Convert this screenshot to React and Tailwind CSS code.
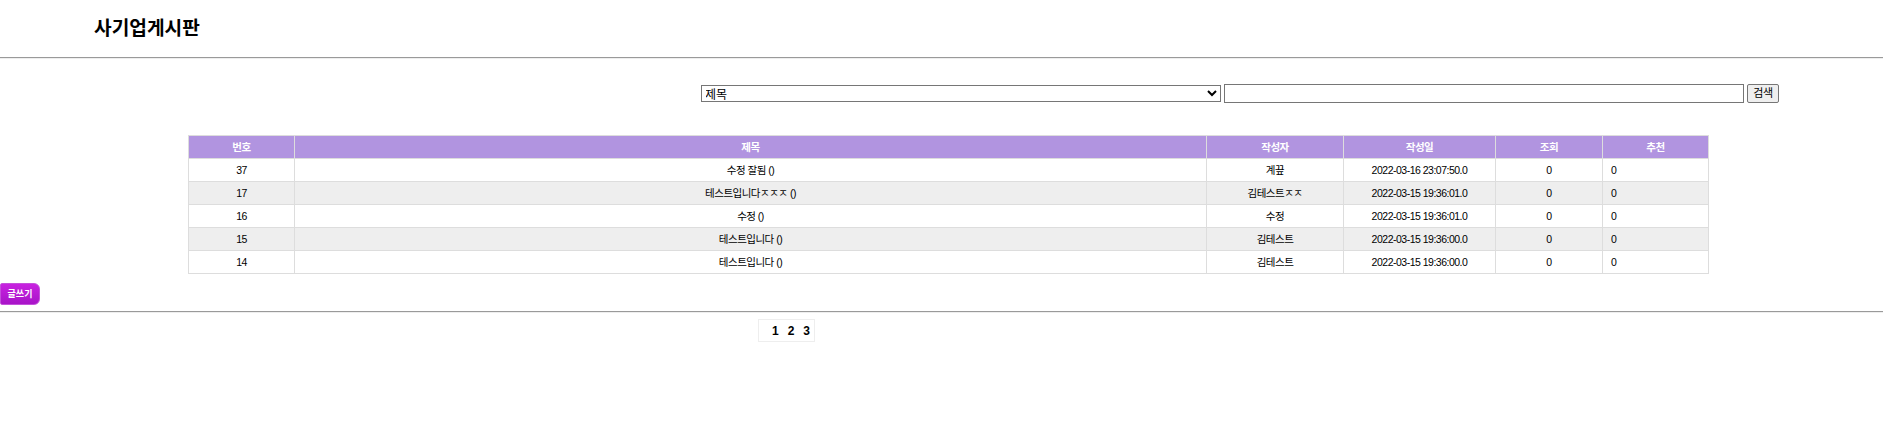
import React from "react";

const rows = [
  ["37", "수정 잘됨 ()", "계끞", "2022-03-16 23:07:50.0"],
  ["17", "테스트입니다ㅈㅈㅈ ()", "김테스트ㅈㅈ", "2022-03-15 19:36:01.0"],
  ["16", "수정 ()", "수정", "2022-03-15 19:36:01.0"],
  ["15", "테스트입니다 ()", "김테스트", "2022-03-15 19:36:00.0"],
  ["14", "테스트입니다 ()", "김테스트", "2022-03-15 19:36:00.0"],
];

const headers = ["번호", "제목", "작성자", "작성일", "조회", "추천"];

export default function App() {
  return (
    <div className="min-h-[426px] bg-white text-black font-['Liberation_Sans','Noto_Sans_CJK_KR',sans-serif]">
      <div className="h-[57px] pl-[94px] pt-[17px]">
        <h3 className="text-[19.2px] font-bold leading-[24px]">사기업게시판</h3>
      </div>
      <hr className="border-0 border-t border-b border-t-[#9a9a9a] border-b-[#eeeeee]" />

      <form className="flex items-center pl-[701px] mt-[25px] h-[19px] gap-[3px]">
        <select className="w-[520px] h-[17px] border border-[#767676] bg-white text-[12px] leading-none -indent-px pt-px">
          <option>제목</option>
        </select>
        <input className="w-[520px] h-[19px] border border-[#767676] bg-white" />
        <button type="button" className="w-[32px] h-[19px] border border-[#767676] bg-[#efefef] rounded-[2px] text-[11px] leading-none tracking-[-0.3px]">
          검색
        </button>
      </form>

      <div className="pl-[188px] mt-[32px]">
        <table className="w-[1520px] table-fixed text-[10.5px] tracking-[-0.5px] border-collapse">
          <colgroup>
            <col className="w-[106px]" />
            <col className="w-[912px]" />
            <col className="w-[137px]" />
            <col className="w-[152px]" />
            <col className="w-[107px]" />
            <col className="w-[106px]" />
          </colgroup>
          <thead>
            <tr className="h-[23px] bg-[#b194e0] text-white">
              {headers.map((h) => (
                <th key={h} className="border border-[#dddddd] font-bold p-0 pt-[2px]">
                  {h}
                </th>
              ))}
            </tr>
          </thead>
          <tbody>
            {rows.map((r, i) => (
              <tr key={r[0]} className={i % 2 === 1 ? "h-[23px] bg-[#eeeeee]" : "h-[23px] bg-white"}>
                {r.map((c, j) => (
                  <td key={j} className="border border-[#dddddd] text-center p-0 pt-[2px]">
                    {c}
                  </td>
                ))}
                <td className="border border-[#dddddd] text-center p-0 pt-[2px]">0</td>
                <td className="border border-[#dddddd] text-left p-0 pt-[2px] pl-[8px]">0</td>
              </tr>
            ))}
          </tbody>
        </table>
      </div>

      <button
        type="button"
        className="block mt-[9px] w-[40px] h-[22px] rounded-r-[6px] rounded-l-[2px] border border-[#c44fdc] bg-gradient-to-b from-[#c822e0] to-[#a814c8] text-white text-[9px] font-bold leading-none"
      >
        글쓰기
      </button>

      <hr className="mt-[6px] border-0 border-t border-b border-t-[#9a9a9a] border-b-[#eeeeee]" />

      <div className="ml-[758px] mt-[6px] flex h-[23px] w-[57px] items-center justify-end gap-[9px] border border-[#eeeeee] pr-[4px] text-[12px] font-bold">
        <span>1</span>
        <span>2</span>
        <span>3</span>
      </div>
    </div>
  );
}
